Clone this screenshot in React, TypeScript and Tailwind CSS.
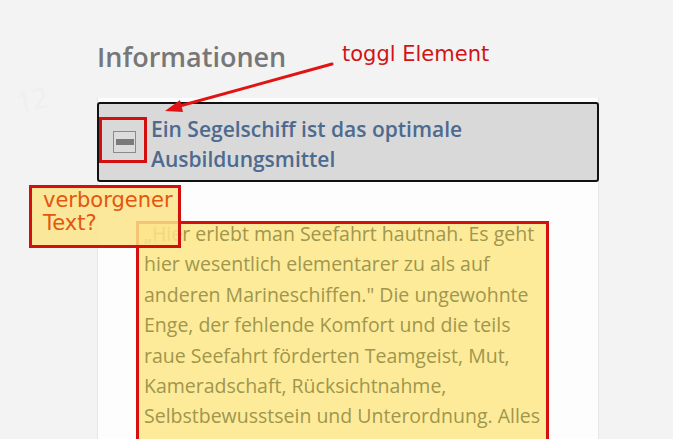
import React from "react";

const lines = [
  "„Hier erlebt man Seefahrt hautnah. Es geht",
  "hier wesentlich elementarer zu als auf",
  "anderen Marineschiffen.\" Die ungewohnte",
  "Enge, der fehlende Komfort und die teils",
  "raue Seefahrt förderten Teamgeist, Mut,",
  "Kameradschaft, Rücksichtnahme,",
  "Selbstbewusstsein und Unterordnung. Alles",
];

export default function App() {
  return (
    <div
      className="relative w-[673px] h-[439px] overflow-hidden bg-[#f3f3f3]"
      style={{ fontFamily: '"Open Sans", "Noto Sans", sans-serif' }}
    >
      {/* faint watermark */}
      <div className="absolute left-[16px] top-[78px] text-[28px] text-[#efefef] -rotate-12 select-none">12</div>

      <div className="ml-[97px] w-[502px] flex flex-col">
        <h1 className="pt-[41px] text-[27px] leading-[32px] font-semibold text-[#777777]">Informationen</h1>

        <div className="mt-[25px] bg-[#fdfdfd] border-l border-r border-[#e6e6e6] pt-[4px] h-[400px]">
          {/* accordion header */}
          <div className="relative -mx-px flex items-center h-[80px] rounded-[3px] border-2 border-[#111111] bg-[#d9d9d9] pl-[14px]">
            <div className="w-[23px] h-[22px] border border-[#8a8a8a] bg-[#dcdcdc] flex items-center justify-center">
              <div className="w-[18px] h-[6px] bg-[#7a7a7a]" />
            </div>
            <div className="ml-[15px] pt-[4px] text-[21px] leading-[30px] font-semibold text-[#4d6a8f]">
              Ein Segelschiff ist das optimale
              <br />
              Ausbildungsmittel
            </div>
            {/* annotation box */}
            <div className="absolute left-[0px] top-[13px] w-[48px] h-[46px] border-[3px] border-[#d40f0f]" />
          </div>

          {/* body text */}
          <div className="relative z-10 mt-[37px] ml-[46px] text-[19.5px] leading-[30.4px] text-[#a0964c] whitespace-nowrap">
            {lines.map((l, i) => (
              <div key={i}>{l}</div>
            ))}
          </div>
        </div>
      </div>

      {/* big highlight box */}
      <div className="absolute z-0 left-[136px] top-[221px] w-[413px] h-[240px] border-[3px] border-[#d40f0f] bg-[#fdeb9a]" />

      {/* hidden text annotation */}
      <div
        className="absolute z-20 left-[29px] top-[185px] w-[152px] h-[63px] border-[3px] border-[#d40f0f] bg-[#fce48a]/85 pl-[11px] pt-[1px] text-[21px] leading-[23px] text-[#e2560e]"
        style={{ fontFamily: '"DejaVu Sans", sans-serif' }}
      >
        verborgener
        <br />
        Text?
      </div>

      {/* toggl Element label */}
      <div
        className="absolute left-[342px] top-[40px] text-[21px] leading-[28px] text-[#d01414]"
        style={{ fontFamily: '"DejaVu Sans", sans-serif' }}
      >
        toggl Element
      </div>

      {/* arrow */}
      <svg className="absolute z-30 left-0 top-0" width="673" height="439" viewBox="0 0 673 439">
        <line x1="332" y1="64" x2="176" y2="107" stroke="#e01414" strokeWidth="3" strokeLinecap="round" />
        <polygon points="165,111 180,100 183,112" fill="#e01414" />
      </svg>
    </div>
  );
}
